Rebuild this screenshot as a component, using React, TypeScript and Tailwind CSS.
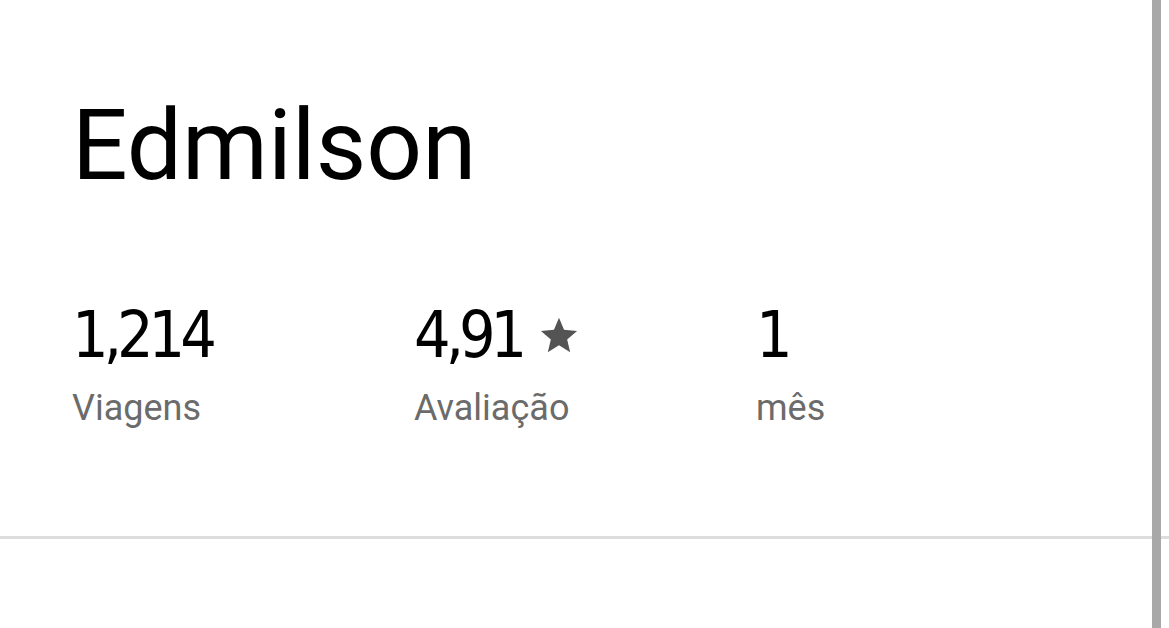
import React from "react";

const stats = [
  { value: "1,214", label: "Viagens", star: false },
  { value: "4,91", label: "Avaliação", star: true },
  { value: "1", label: "mês", star: false },
];

function Star() {
  return (
    <svg viewBox="0 0 24 24" className="ml-[15px] h-[44px] w-[44px] text-[#545454]" aria-hidden="true">
      <path
        fill="currentColor"
        d="M12 2.6l2.75 6.6 7.1.57-5.4 4.64 1.65 6.95L12 17.6l-6.1 3.76 1.65-6.95-5.4-4.64 7.1-.57z"
      />
    </svg>
  );
}

export default function App() {
  return (
    <div className="relative h-[628px] w-[1169px] overflow-hidden bg-white">
      <div className="pr-[17px]">
        <div className="pl-[72px] pt-[97px]">
          <h1 className="font-['Roboto',sans-serif] text-[98px] leading-[98px] font-normal text-black">
            Edmilson
          </h1>
        </div>

        <div className="flex pl-[72px] pt-[107px]">
          {stats.map((s) => (
            <div key={s.label} className="flex w-[342px] flex-col">
              <div className="flex h-[66px] items-center">
                <span className="font-['DejaVu_Sans_Condensed','DejaVu_Sans',sans-serif] text-[64px] leading-[66px] tracking-[-5px] text-black">
                  {s.value}
                </span>
                {s.star && <Star />}
              </div>
              <span className="mt-[20px] font-['Roboto',sans-serif] text-[36px] leading-[40px] text-[#6b6b6b]">
                {s.label}
              </span>
            </div>
          ))}
        </div>
      </div>

      <div className="mt-[108px] h-[3px] w-full bg-[rgba(0,0,0,0.133)]" />

      <div className="absolute top-0 right-[8px] h-full w-[9px] bg-[#a8a8a8]" />
    </div>
  );
}
